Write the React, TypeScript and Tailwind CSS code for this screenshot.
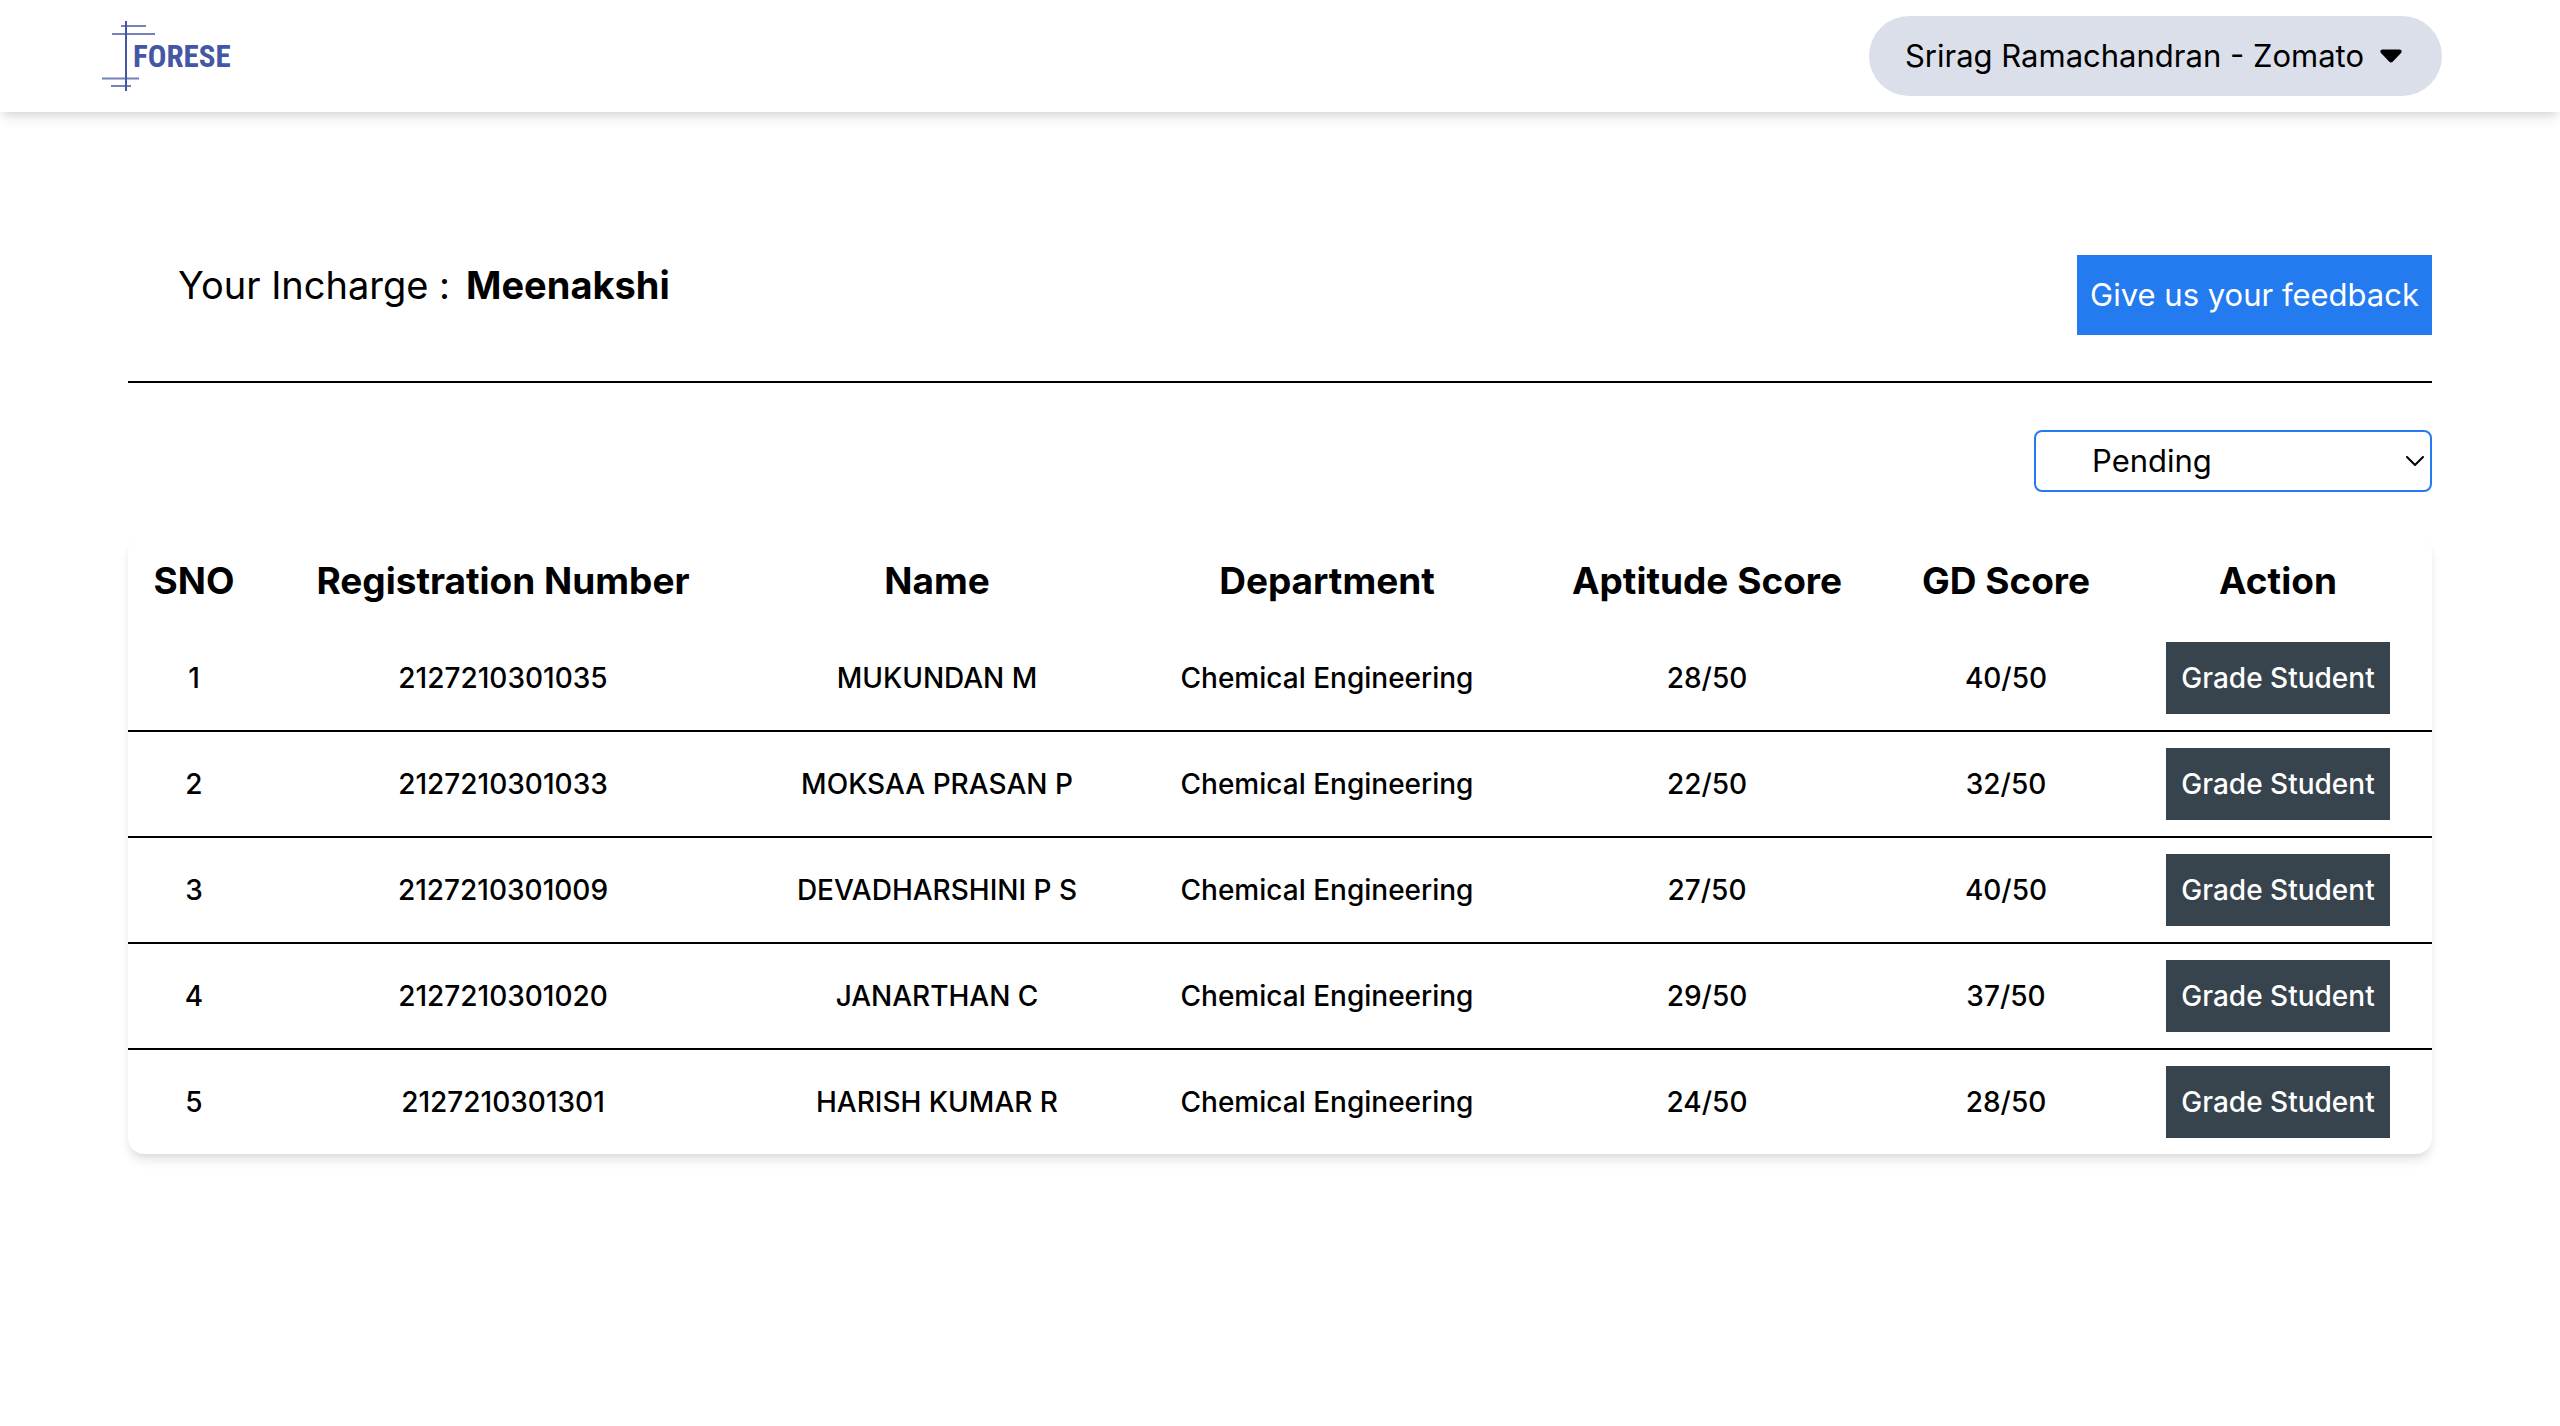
import { useState } from "react";

type Student = {
  reg: string;
  name: string;
  department: string;
  aptitude: string;
  gd: string;
};

const students: Student[] = [
  { reg: "2127210301035", name: "MUKUNDAN M", department: "Chemical Engineering", aptitude: "28/50", gd: "40/50" },
  { reg: "2127210301033", name: "MOKSAA PRASAN P", department: "Chemical Engineering", aptitude: "22/50", gd: "32/50" },
  { reg: "2127210301009", name: "DEVADHARSHINI P S", department: "Chemical Engineering", aptitude: "27/50", gd: "40/50" },
  { reg: "2127210301020", name: "JANARTHAN C", department: "Chemical Engineering", aptitude: "29/50", gd: "37/50" },
  { reg: "2127210301301", name: "HARISH KUMAR R", department: "Chemical Engineering", aptitude: "24/50", gd: "28/50" },
];

const columns = [
  { label: "SNO", width: "w-[132px]" },
  { label: "Registration Number", width: "w-[486px]" },
  { label: "Name", width: "w-[382px]" },
  { label: "Department", width: "w-[398px]" },
  { label: "Aptitude Score", width: "w-[362px]" },
  { label: "GD Score", width: "w-[236px]" },
  { label: "Action", width: "w-[308px]" },
];

function Logo() {
  return (
    <a href="#" aria-label="Forese home" className="block">
      <svg viewBox="0 0 130 72" className="h-[72px] w-[130px]" fill="none">
        <g stroke="#4457a5">
          <path d="M24 1V71" strokeWidth="2" />
          <path d="M19 6H44M10 14H53M0 58.500H37M9 66H29" strokeWidth="2" opacity="0.75" />
        </g>
        <text
          x="31"
          y="47"
          fill="#4457a5"
          fontSize="31"
          fontWeight="700"
          fontFamily="'Roboto Condensed', 'Liberation Sans Narrow', Roboto, sans-serif"
        >
          FORESE
        </text>
      </svg>
    </a>
  );
}

function Header() {
  return (
    <header className="flex h-28 items-center justify-between bg-white pr-[118px] pl-[102px] shadow-[0_8px_12px_-2px_rgba(0,0,0,0.1),0_4px_8px_-4px_rgba(0,0,0,0.1)]">
      <Logo />
      <button type="button" className="flex h-20 items-center gap-4 rounded-full bg-[#dbdfea] pr-10 pl-9 text-[31px]">
        Srirag Ramachandran - Zomato
        <svg viewBox="0 0 22 14" className="h-[14px] w-[22px]" fill="currentColor" aria-hidden="true">
          <path d="M2.500 0.500h17c2 0 2.800 2 1.500 3.400l-8.300 8.800c-1 1-2.400 1-3.400 0L1 3.900C-0.300 2.500 0.500 0.500 2.500 0.500z" />
        </svg>
      </button>
    </header>
  );
}

export default function App() {
  const [status, setStatus] = useState("Pending");

  return (
    <div className="min-h-screen bg-white font-['Inter',sans-serif] text-black">
      <Header />
      <main className="px-32 pt-[143px]">
        <section className="flex items-start justify-between border-b-2 border-black pb-[46px]">
          <h1 className="pl-[50px] text-[38px] leading-[60px]">
            Your Incharge :<span className="ml-4 font-bold">Meenakshi</span>
          </h1>
          <button type="button" className="h-20 bg-[#237bef] px-[13px] text-[31px] text-white">
            Give us your feedback
          </button>
        </section>

        <div className="mt-[47px] flex justify-end">
          <div className="relative">
            <select
              aria-label="Grading status"
              value={status}
              onChange={(e) => setStatus(e.target.value)}
              className="block h-[62px] w-[398px] appearance-none rounded-lg border-2 border-[#237bef] bg-white pl-14 text-[31px]"
            >
              <option>Pending</option>
              <option>Completed</option>
            </select>
            <svg
              viewBox="0 0 18 10"
              className="pointer-events-none absolute top-[26px] right-2 h-[10px] w-[18px]"
              fill="none"
              stroke="black"
              strokeWidth="2"
              strokeLinecap="round"
              aria-hidden="true"
            >
              <path d="M1 1L9 9L17 1" />
            </svg>
          </div>
        </div>

        <div className="mt-11 overflow-hidden rounded-2xl bg-white shadow-[0_8px_12px_-2px_rgba(0,0,0,0.1),0_4px_8px_-4px_rgba(0,0,0,0.1)]">
          <table className="w-full table-fixed text-center">
            <colgroup>
              {columns.map((c) => (
                <col key={c.label} className={c.width} />
              ))}
            </colgroup>
            <thead>
              <tr className="h-[90px] text-[37px] whitespace-nowrap">
                {columns.map((c) => (
                  <th key={c.label} scope="col" className="font-bold">
                    {c.label}
                  </th>
                ))}
              </tr>
            </thead>
            <tbody className="text-[28px] font-medium">
              {students.map((s, i) => (
                <tr key={s.reg} className="border-b-2 border-black last:border-b-0">
                  <td>{i + 1}</td>
                  <td>{s.reg}</td>
                  <td>{s.name}</td>
                  <td>{s.department}</td>
                  <td>{s.aptitude}</td>
                  <td>{s.gd}</td>
                  <td className="py-4">
                    <button type="button" className="mx-auto block h-[72px] bg-[#37444d] px-[15px] whitespace-nowrap text-white">
                      Grade Student
                    </button>
                  </td>
                </tr>
              ))}
            </tbody>
          </table>
        </div>
      </main>
    </div>
  );
}
